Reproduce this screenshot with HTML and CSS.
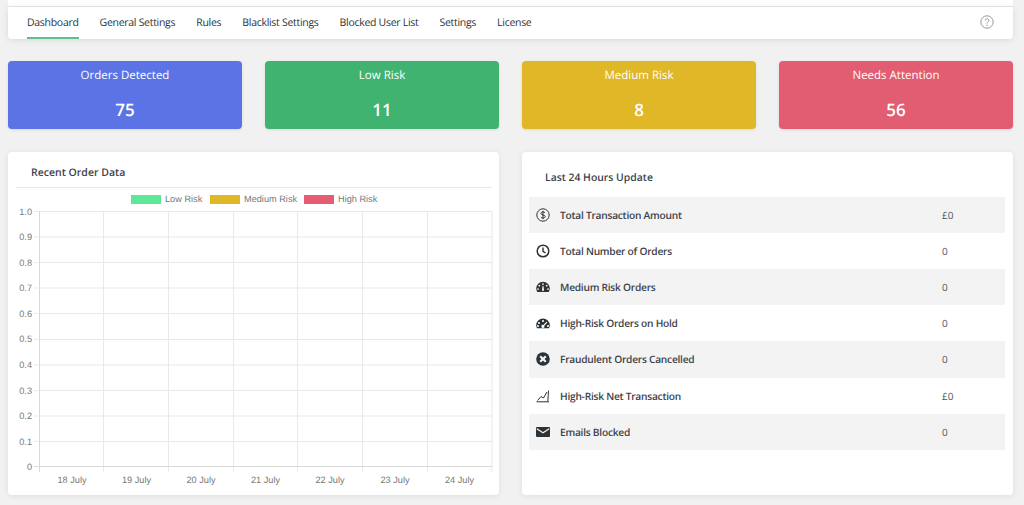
FILE: index.html
```html
<!DOCTYPE html>
<html lang="en">
<head>
<meta charset="utf-8">
<title>Dashboard</title>
<link rel="stylesheet" href="styles.css">
</head>
<body>
<div class="topstrip"></div>
<nav class="nav">
  <ul class="tabs">
    <li class="tab active">Dashboard</li>
    <li class="tab">General Settings</li>
    <li class="tab">Rules</li>
    <li class="tab">Blacklist Settings</li>
    <li class="tab">Blocked User List</li>
    <li class="tab">Settings</li>
    <li class="tab">License</li>
  </ul>
  <svg class="help" viewBox="0 0 14 14" width="14" height="14"><circle cx="7" cy="7" r="6.2" fill="none" stroke="#999" stroke-width="1"/><path d="M5.2 5.5a1.8 1.8 0 1 1 2.7 1.6c-.6.35-.9.7-.9 1.4" fill="none" stroke="#999" stroke-width="1"/><circle cx="7" cy="10.3" r=".7" fill="#999"/></svg>
</nav>
<section class="stats">
  <div class="stat blue"><div class="stat-label">Orders Detected</div><div class="stat-value">75</div></div>
  <div class="stat green"><div class="stat-label">Low Risk</div><div class="stat-value">11</div></div>
  <div class="stat yellow"><div class="stat-label">Medium Risk</div><div class="stat-value">8</div></div>
  <div class="stat red"><div class="stat-label">Needs Attention</div><div class="stat-value">56</div></div>
</section>
<section class="panels">
  <div class="panel chart-panel">
    <h2 class="chart-title">Recent Order Data</h2>
    <svg class="chart" viewBox="0 0 491 343" width="491" height="343">
      <g class="grid">
        <path d="M26 59.500H484M26 85H484M26 110.500H484M26 136H484M26 161.500H484M26 187.500H484M26 213H484M26 238.500H484M26 264H484M26 289.500H484"/>
        <path d="M95.500 59V320M160.500 59V320M225.500 59V320M289.500 59V320M354.500 59V320M419.500 59V320M484 59V320"/>
      </g>
      <path class="axis" d="M31.500 59V320M26 314.500H484"/>
      <rect x="123" y="43" width="30" height="9" fill="#5ce896"/>
      <text x="157" y="50">Low Risk</text>
      <rect x="202" y="43" width="30" height="9" fill="#e0b726"/>
      <text x="236" y="50">Medium Risk</text>
      <rect x="296" y="43" width="30" height="9" fill="#e55c73"/>
      <text x="330" y="50">High Risk</text>
      <g class="ylabels">
        <text x="24" y="62.500">1.0</text><text x="24" y="88">0.9</text><text x="24" y="113.500">0.8</text><text x="24" y="139">0.7</text><text x="24" y="164.500">0.6</text><text x="24" y="190">0.5</text><text x="24" y="216">0.4</text><text x="24" y="241.500">0.3</text><text x="24" y="267">0.2</text><text x="24" y="292.500">0.1</text><text x="24" y="318">0</text>
      </g>
      <g class="xlabels">
        <text x="64" y="331">18 July</text><text x="128.500" y="331">19 July</text><text x="193" y="331">20 July</text><text x="257.500" y="331">21 July</text><text x="322" y="331">22 July</text><text x="387" y="331">23 July</text><text x="451.500" y="331">24 July</text>
      </g>
    </svg>
  </div>
  <div class="panel update-panel">
    <h2 class="update-title">Last 24 Hours Update</h2>
    <div class="rows">
      <div class="row">
        <svg class="ico" viewBox="0 0 14 14"><circle cx="7" cy="7" r="6.2" fill="none" stroke="#333" stroke-width="1"/><path d="M9 4.900C8.600 4.200 7.800 3.900 7 3.900c-1.200 0-2.100.6-2.100 1.500C4.900 7.500 9.200 6.500 9.200 8.600c0 .9-1 1.500-2.200 1.500-.9 0-1.700-.4-2.100-1.100M7 2.900v8.200" fill="none" stroke="#333" stroke-width="1"/></svg>
        <span class="row-label">Total Transaction Amount</span><span class="row-value">£0</span>
      </div>
      <div class="row">
        <svg class="ico" viewBox="0 0 14 14"><circle cx="7" cy="7" r="5.800" fill="none" stroke="#2c3338" stroke-width="1.500"/><path d="M7 3.500V7.300L9.500 9" fill="none" stroke="#2c3338" stroke-width="1.400"/></svg>
        <span class="row-label">Total Number of Orders</span><span class="row-value">0</span>
      </div>
      <div class="row">
        <svg class="ico" viewBox="0 0 14 14"><path fill="#2c3338" fill-rule="evenodd" d="M7 1.800A6.800 6.800 0 0 0 .2 8.600c0 1.300.4 2.500 1.100 3.500h11.400c.7-1 1.100-2.200 1.100-3.500A6.800 6.800 0 0 0 7 1.800zM7 3.200a.9.9 0 1 1 0 1.800.9.9 0 0 1 0-1.800zM3.300 4.800a.9.9 0 1 1 0 1.800.9.9 0 0 1 0-1.800zM2 8.200a.9.9 0 1 1 0 1.800.9.9 0 0 1 0-1.800zM12 8.200a.9.9 0 1 1 0 1.800.9.9 0 0 1 0-1.800zM10.700 4.800a.9.9 0 1 1 0 1.800.9.9 0 0 1 0-1.800zM6.500 6h1l.6 4.800H5.900z"/></svg>
        <span class="row-label">Medium Risk Orders</span><span class="row-value">0</span>
      </div>
      <div class="row">
        <svg class="ico" viewBox="0 0 14 14"><path fill="#2c3338" fill-rule="evenodd" d="M7 2.500A6.800 6.800 0 0 0 .2 9.300c0 1 .3 2 .8 2.900h12c.5-.9.8-1.900.8-2.900A6.800 6.800 0 0 0 7 2.500zM3 6a1 1 0 1 1 0 2 1 1 0 0 1 0-2zM7 4a1 1 0 1 1 0 2 1 1 0 0 1 0-2zM2 9a1 1 0 1 1 0 2 1 1 0 0 1 0-2zM12 9a1 1 0 1 1 0 2 1 1 0 0 1 0-2zM10.500 5.800l.8.8-3 3.200a1.500 1.500 0 1 1-.9-.8z"/></svg>
        <span class="row-label">High-Risk Orders on Hold</span><span class="row-value">0</span>
      </div>
      <div class="row">
        <svg class="ico" viewBox="0 0 14 14"><circle cx="7" cy="7" r="6.800" fill="#2c3338"/><path d="M4.200 4.200l5.600 5.600M9.800 4.200l-5.600 5.600" stroke="#f3f3f3" stroke-width="2.200"/></svg>
        <span class="row-label">Fraudulent Orders Cancelled</span><span class="row-value">0</span>
      </div>
      <div class="row">
        <svg class="ico" viewBox="0 0 14 14"><path d="M.5 12.800H13M1.500 11.500L5 7.500l2.500 1.500L11 3M12.500 1.500L11.800 12.500" fill="none" stroke="#2c3338" stroke-width="1"/></svg>
        <span class="row-label">High-Risk Net Transaction</span><span class="row-value">£0</span>
      </div>
      <div class="row">
        <svg class="ico" viewBox="0 0 14 14"><rect y="2" width="14" height="10" rx="1" fill="#2c3338"/><path d="M.8 3.800L7 7.800l6.200-4" fill="none" stroke="#f3f3f3" stroke-width="1.200"/></svg>
        <span class="row-label">Emails Blocked</span><span class="row-value">0</span>
      </div>
    </div>
  </div>
</section>
</body>
</html>
```

FILE: styles.css
```css
* { box-sizing: border-box; }
html, body { margin: 0; padding: 0; }
body {
  width: 1024px;
  height: 505px;
  overflow: hidden;
  background: #f1f1f1;
  font-family: "Open Sans", "Noto Sans", sans-serif;
  color: #2c3338;
  padding: 0 11px 0 8px;
  text-rendering: geometricPrecision;
}
.topstrip { height: 7px; background: #fff; border-bottom: 1px solid #e8e8e8; }
.nav {
  height: 32px;
  background: #fff;
  border-radius: 0 0 4px 4px;
  box-shadow: 0 1px 6px rgba(0,0,0,.1);
  display: flex;
  justify-content: space-between;
  padding: 0 19px;
  width: 1005px;
}
.tabs { display: flex; gap: 21px; margin: 0; padding: 0; list-style: none; }
.tab { font-size: 10.500px; letter-spacing: -.29px; line-height: 32px; height: 32px; color: #2c3338; white-space: nowrap; }
.tab.active { border-bottom: 2px solid #5cc08a; }
.help { margin-top: 8px; }
.stats { display: grid; grid-template-columns: repeat(4, 234px); gap: 23px; margin-top: 22px; }
.stat {
  height: 68px;
  border-radius: 4px;
  color: #fff;
  text-align: center;
  box-shadow: 0 1px 3px rgba(0,0,0,.1);
  padding-top: 6px;
}
.stat-label { font-size: 11.500px; line-height: 18px; }
.stat-value { font-size: 17px; font-weight: 600; line-height: 24px; margin-top: 13px; }
.blue { background: #5b73e4; }
.green { background: #40b370; }
.yellow { background: #e0b726; }
.red { background: #e25c72; }
.panels { display: grid; grid-template-columns: repeat(2, 491px); gap: 23px; margin-top: 23px; }
.panel { height: 343px; background: #fff; border-radius: 4px; box-shadow: 0 1px 6px rgba(0,0,0,.08); position: relative; }
.chart-title {
  margin: 0 7px 0 8px;
  padding: 12px 15px 0;
  height: 36px;
  font-size: 10.500px;
  line-height: 18px;
  font-weight: 600;
  color: #3c434a;
  border-bottom: 1px solid #e8e8e8;
}
.chart { position: absolute; left: 0; top: 0; }
.grid path { stroke: #e9e9e9; stroke-width: 1; fill: none; }
.axis { stroke: #d9d9d9; stroke-width: 1; fill: none; }
.chart text { font-family: "Liberation Sans", Arial, sans-serif; font-size: 9.200px; fill: #777; }
.ylabels text { text-anchor: end; }
.xlabels text { text-anchor: middle; }
.update-title {
  margin: 0;
  padding: 17px 23px 0;
  height: 44.600px;
  font-size: 10.400px;
  line-height: 18px;
  font-weight: 600;
  color: #3c434a;
}
.rows { margin: 0 8px 0 7px; }
.row { height: 36.200px; display: grid; grid-template-columns: 14px 1fr 33px; column-gap: 10px; align-items: center; padding: 0 30px 0 7px; }
.row:nth-child(odd) { background: #f3f3f3; }
.ico { width: 14px; height: 14px; display: block; }
.row-label { font-size: 10.200px; letter-spacing: -.25px; font-weight: 600; color: #3c434a; }
.row-value { font-size: 10px; color: #50575e; }
```
